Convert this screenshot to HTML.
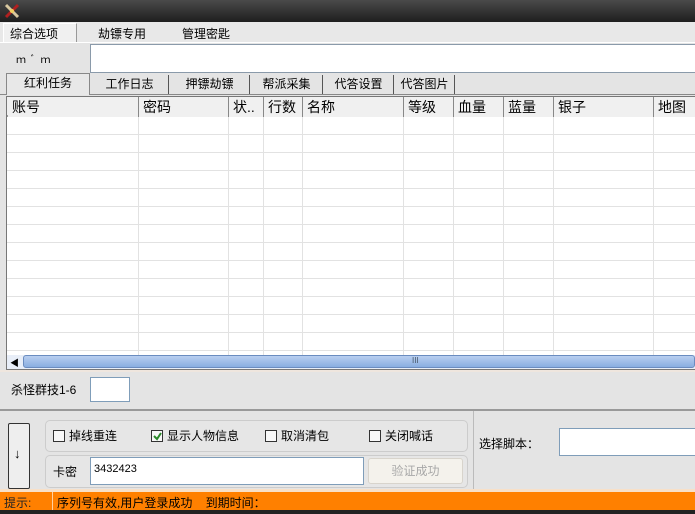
<!DOCTYPE html>
<html><head><meta charset="utf-8"><style>
*{margin:0;padding:0;box-sizing:border-box}
body{width:695px;height:514px;overflow:hidden;background:#e4e4e4;font-family:"Liberation Sans","Noto Sans CJK SC","WenQuanYi Zen Hei",sans-serif;font-size:12px;color:#000;position:relative}
.a{position:absolute;white-space:nowrap}
.tab{position:absolute;top:75px;height:19px;line-height:18px;text-align:center;border-right:1px solid #555;font-size:12px}
.col{position:absolute;top:97px;height:20px;border-left:1px solid #888;font-size:14px;line-height:20px;padding-left:4px;background:#f0f0f0}
.vl{position:absolute;top:117px;height:238px;width:1px;background:#e2e2e2}
.cb{display:inline-block;width:12px;height:12px;border:1px solid #333;background:#f8f8f8;vertical-align:-2px;margin-right:4px;position:relative}
</style></head><body>
<!-- title bar -->
<div class="a" style="left:0;top:0;width:695px;height:22px;background:linear-gradient(#4a4a4a,#1e1e1e)"></div>
<svg class="a" style="left:3px;top:2px" width="18" height="18" viewBox="0 0 18 18"><path d="M3 3 L15 15" stroke="#d8c8a0" stroke-width="3"/><path d="M15 3 L3 15" stroke="#b02020" stroke-width="3"/><circle cx="9" cy="9" r="2" fill="#f0d060"/></svg>
<!-- menu row -->
<div class="a" style="left:0;top:22px;width:695px;height:20px;background:#e8e8e8"></div>
<div class="a" style="left:3px;top:23px;width:74px;height:19px;background:#f0f0f0;border:1px solid #fff;border-right-color:#999;border-bottom:none"></div>
<div class="a" style="left:10px;top:25px">综合选项</div>
<div class="a" style="left:98px;top:25px">劫镖专用</div>
<div class="a" style="left:182px;top:25px">管理密匙</div>
<div class="a" style="left:0;top:42px;width:695px;height:1px;background:#fff"></div>
<div class="a" style="left:16px;top:51px;font-size:10px;letter-spacing:1px">ｍ&nbsp;ﾞ&nbsp;ｍ</div>
<div class="a" style="left:90px;top:44px;width:610px;height:29px;background:#fff;border:1px solid #8a9aaa"></div>
<!-- tabs -->
<div class="a" style="left:0;top:94px;width:695px;height:1px;background:#888"></div>
<div class="tab" style="left:6px;top:73px;width:84px;height:22px;background:#e8e8e8;border:1px solid #888;border-bottom:none">红利任务</div>
<div class="tab" style="left:91px;width:78px">工作日志</div>
<div class="tab" style="left:170px;width:80px">押镖劫镖</div>
<div class="tab" style="left:251px;width:72px">帮派采集</div>
<div class="tab" style="left:324px;width:70px">代答设置</div>
<div class="tab" style="left:395px;width:60px">代答图片</div>
<!-- grid -->
<div class="a" style="left:6px;top:96px;width:695px;height:274px;border:1px solid #777;border-right:none;background:#fff"></div>
<div class="a" style="left:7px;top:97px;width:688px;height:20px;background:#f0f0f0;border-bottom:2px solid #999"></div>
<div class="col" style="left:8px;width:130px;border-left:none">账号</div>
<div class="col" style="left:138px;width:90px">密码</div>
<div class="col" style="left:228px;width:35px">状..</div>
<div class="col" style="left:263px;width:39px">行数</div>
<div class="col" style="left:302px;width:101px">名称</div>
<div class="col" style="left:403px;width:50px">等级</div>
<div class="col" style="left:453px;width:50px">血量</div>
<div class="col" style="left:503px;width:50px">蓝量</div>
<div class="col" style="left:553px;width:100px">银子</div>
<div class="col" style="left:653px;width:42px">地图</div>
<div class="a" style="left:7px;top:117px;width:688px;height:238px;background:repeating-linear-gradient(#fff 0 17px,#e2e2e2 17px 18px)"></div>
<div class="vl" style="left:138px"></div><div class="vl" style="left:228px"></div><div class="vl" style="left:263px"></div><div class="vl" style="left:302px"></div><div class="vl" style="left:403px"></div><div class="vl" style="left:453px"></div><div class="vl" style="left:503px"></div><div class="vl" style="left:553px"></div><div class="vl" style="left:653px"></div>
<!-- scrollbar -->
<div class="a" style="left:7px;top:355px;width:688px;height:14px;background:#e8eef8"></div>
<div class="a" style="left:10px;top:356px;font-size:9px">◀</div>
<div class="a" style="left:23px;top:355px;width:672px;height:13px;background:linear-gradient(#b8cef0,#8aaee0);border:1px solid #6a8cc0;border-radius:3px"></div>
<div class="a" style="left:412px;top:356px;font-size:8px;color:#456">III</div>
<div class="a" style="left:0;top:370px;width:695px;height:2px;background:#efe6de"></div>
<!-- skill row -->
<div class="a" style="left:11px;top:381px">杀怪群技1-6</div>
<div class="a" style="left:90px;top:377px;width:40px;height:25px;background:#fff;border:1px solid #7f9db9"></div>
<div class="a" style="left:0;top:409px;width:695px;height:2px;background:#999"></div>
<!-- bottom panel -->
<div class="a" style="left:8px;top:423px;width:22px;height:66px;border:1px solid #333;border-radius:2px;background:#eee"></div>
<div class="a" style="left:14px;top:446px;font-size:13px">↓</div>
<div class="a" style="left:45px;top:420px;width:423px;height:32px;border:1px solid #ccc;border-radius:5px;background:#e6e6e6"></div>
<div class="a" style="left:53px;top:427px"><span class="cb"></span>掉线重连</div>
<div class="a" style="left:151px;top:427px"><span class="cb"><svg style="position:absolute;left:1px;top:1px" width="9" height="9"><path d="M1 4 L4 7 L8 1" stroke="#2a8a2a" stroke-width="2" fill="none"/></svg></span>显示人物信息</div>
<div class="a" style="left:265px;top:427px"><span class="cb"></span>取消清包</div>
<div class="a" style="left:369px;top:427px"><span class="cb"></span>关闭喊话</div>
<div class="a" style="left:45px;top:455px;width:423px;height:33px;border:1px solid #ccc;border-radius:5px;background:#e6e6e6"></div>
<div class="a" style="left:53px;top:463px">卡密</div>
<div class="a" style="left:90px;top:457px;width:274px;height:28px;background:#fff;border:1px solid #7f9db9;font-size:11px;padding:5px 3px">3432423</div>
<div class="a" style="left:368px;top:458px;width:95px;height:26px;background:#f4f2ec;border:1px solid #d8d4cc;border-radius:3px;color:#a8a8a8;text-align:center;line-height:24px">验证成功</div>
<div class="a" style="left:473px;top:411px;width:1px;height:80px;background:#bbb"></div>
<div class="a" style="left:479px;top:435px">选择脚本：</div>
<div class="a" style="left:559px;top:428px;width:140px;height:28px;background:#fff;border:1px solid #7f9db9"></div>
<div class="a" style="left:0;top:489px;width:695px;height:3px;background:#f8e0c8"></div>
<!-- status -->
<div class="a" style="left:0;top:492px;width:695px;height:18px;background:#ff8000"></div>
<div class="a" style="left:52px;top:492px;width:1px;height:18px;background:#ffd0a0"></div>
<div class="a" style="left:4px;top:494px;color:#222">提示:</div>
<div class="a" style="left:57px;top:494px">序列号有效,用户登录成功&nbsp;&nbsp;&nbsp;&nbsp;到期时间：</div>
<div class="a" style="left:0;top:510px;width:695px;height:4px;background:#222"></div>
</body></html>
